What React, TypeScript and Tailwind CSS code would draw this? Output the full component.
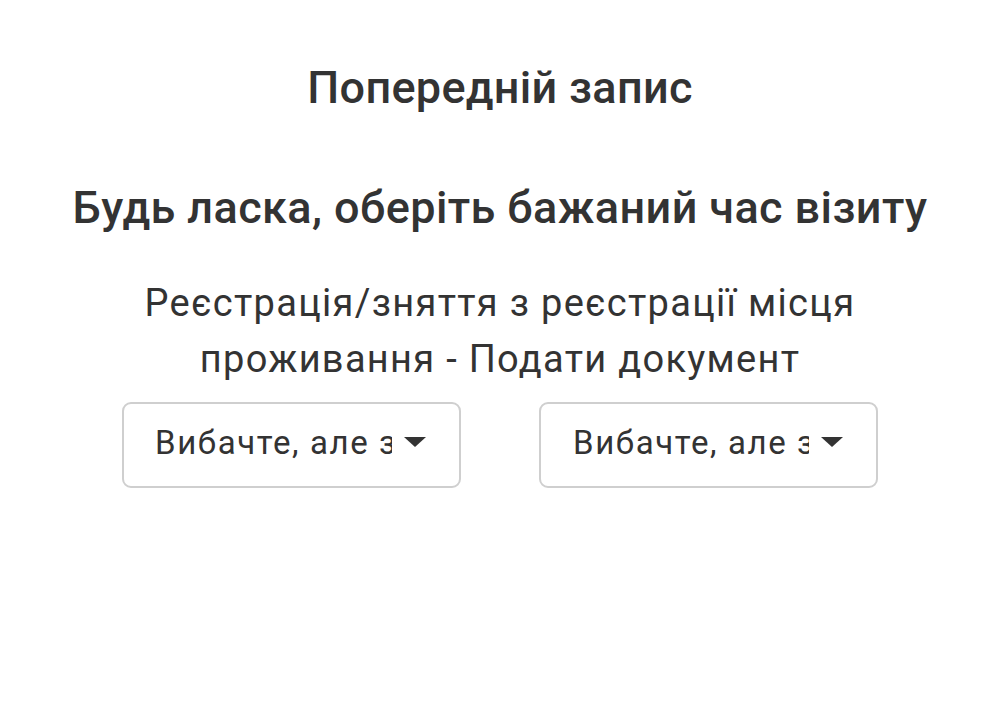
import React from "react";

const Caret = () => (
  <svg width="22" height="10" viewBox="0 0 22 10" className="shrink-0">
    <path d="M0 0 L22 0 L11 10 Z" fill="#333333" />
  </svg>
);

const TimeSelect = ({ padLeft }: { padLeft: string }) => (
  <div
    className={`flex items-center w-[339px] h-[86px] border-2 border-[#cfcfcf] rounded-[9px] bg-white pr-[33px] pb-[6px] ${padLeft}`}
  >
    <span className="flex-1 overflow-hidden whitespace-nowrap text-[33px] tracking-[1.6px] text-[#333333] leading-none">
      Вибачте, але зараз немає вільного часу
    </span>
    <span className="ml-[12px] flex">
      <Caret />
    </span>
  </div>
);

export default function App() {
  return (
    <div
      className="min-h-[717px] w-[1000px] bg-white flex flex-col items-center text-[#333333]"
      style={{ fontFamily: "Roboto, 'Noto Sans', sans-serif" }}
    >
      <h1 className="mt-[65px] text-[45px] font-medium leading-none tracking-[0.3px]">
        Попередній запис
      </h1>
      <h2 className="mt-[75px] text-[45px] font-medium leading-none tracking-[0.4px]">
        Будь ласка, оберіть бажаний час візиту
      </h2>
      <p className="mt-[45px] w-[800px] text-center text-[38px] leading-[56px] tracking-[1.3px]">
        Реєстрація/зняття з реєстрації місця проживання - Подати документ
      </p>
      <div className="mt-[15px] flex gap-[78px]">
        <TimeSelect padLeft="pl-[31px]" />
        <TimeSelect padLeft="pl-[32px]" />
      </div>
    </div>
  );
}
